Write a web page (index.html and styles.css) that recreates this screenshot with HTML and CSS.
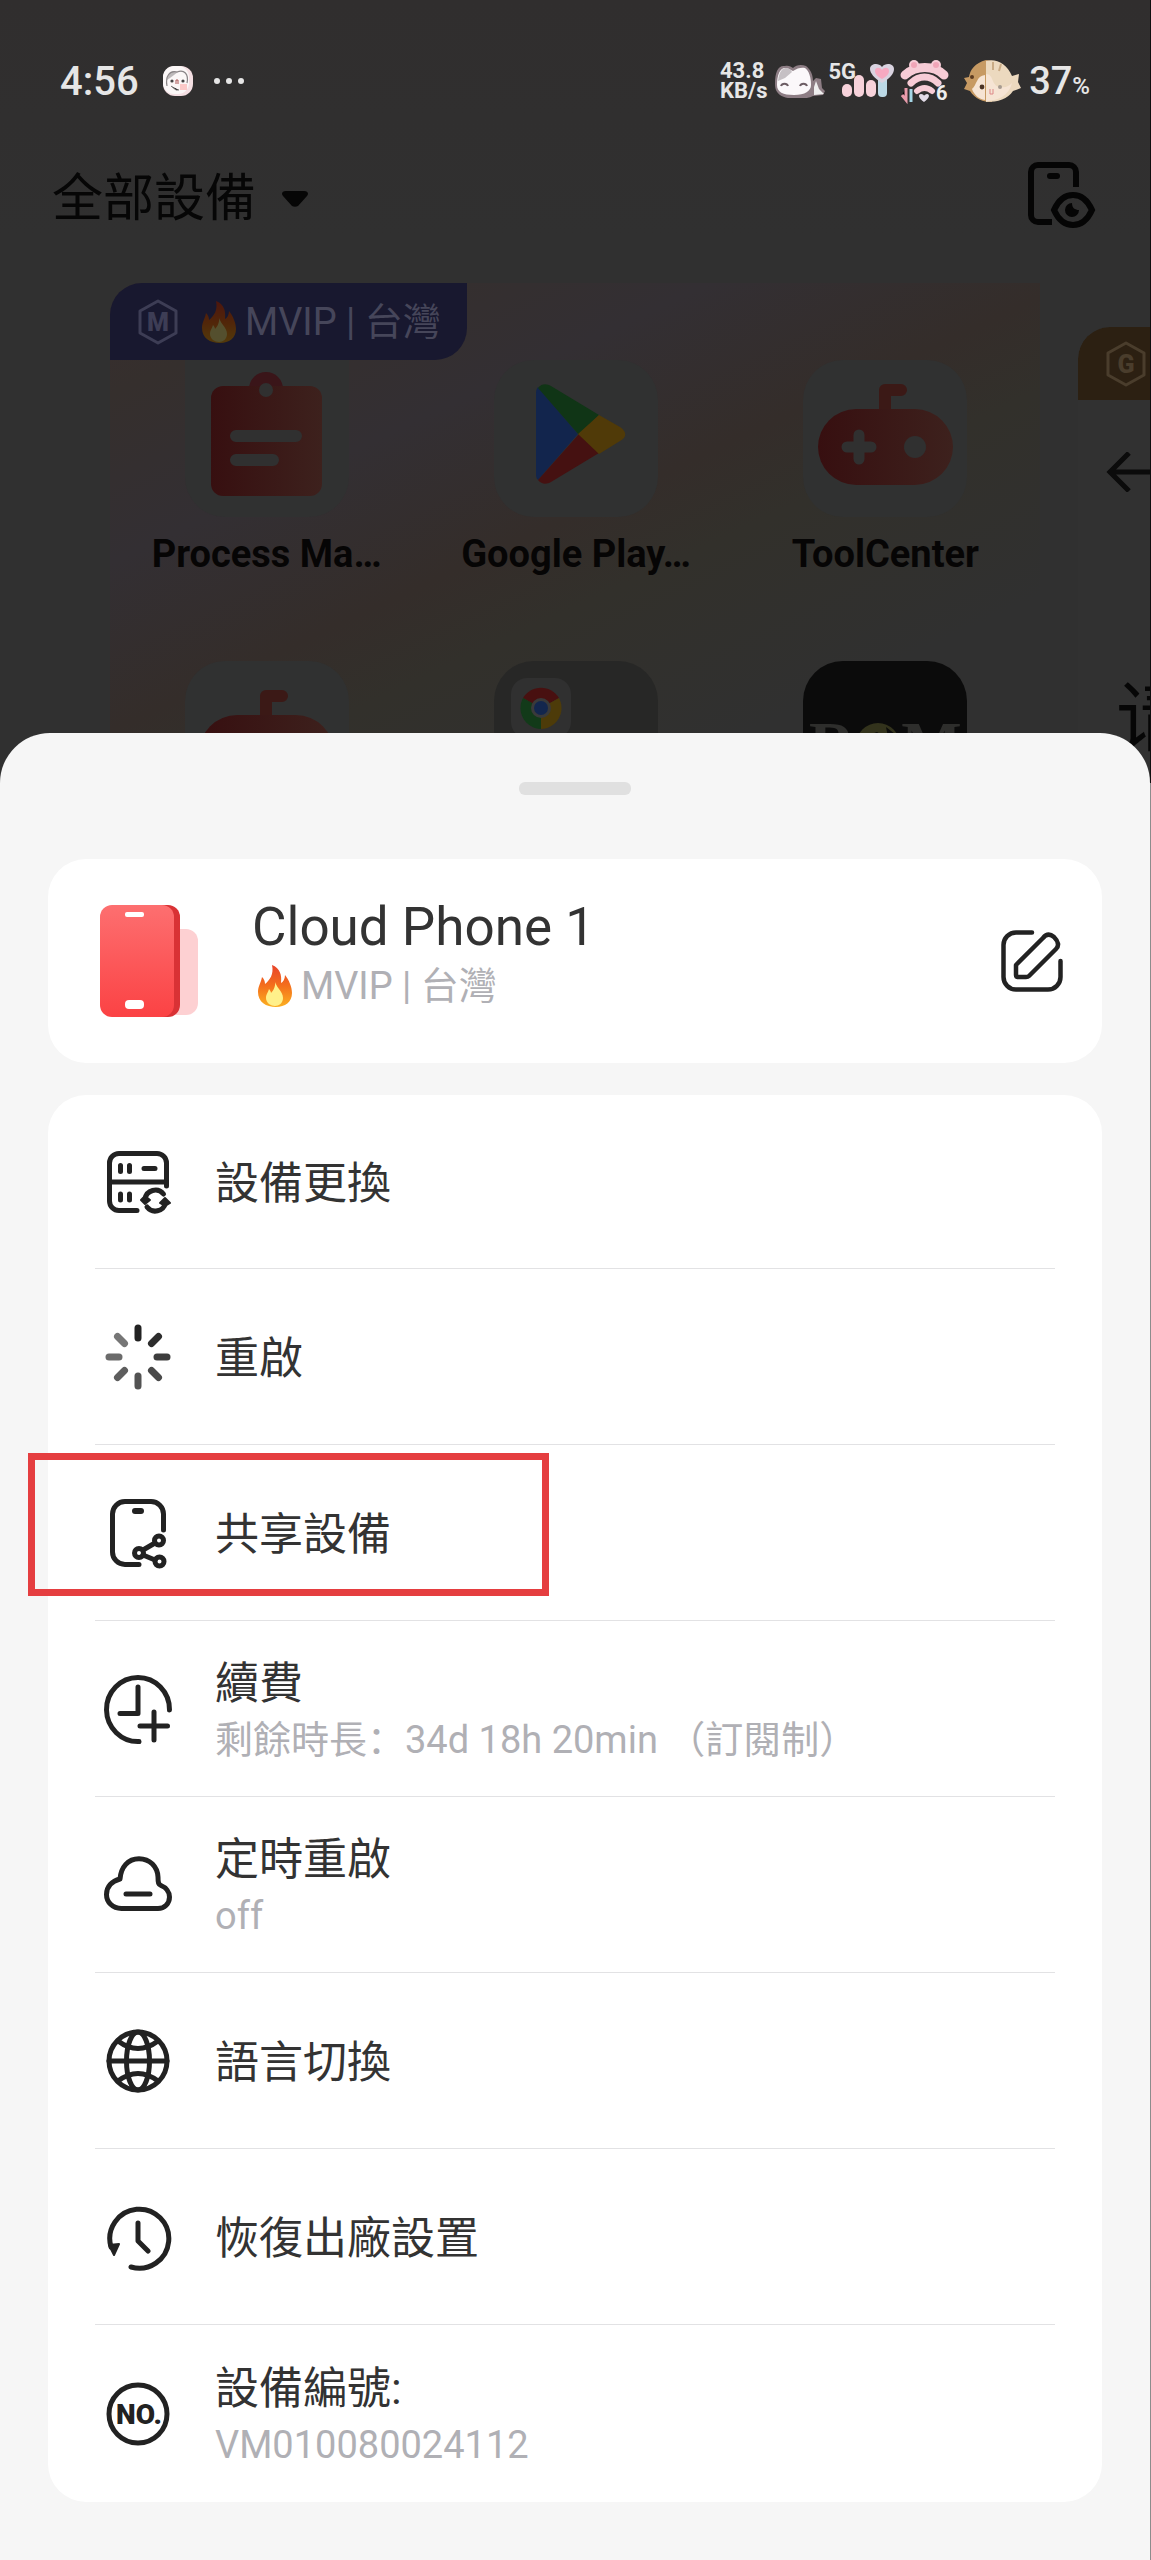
FILE: index.html
```html
<!DOCTYPE html>
<html lang="zh">
<head>
<meta charset="utf-8">
<meta name="viewport" content="width=device-width, initial-scale=1">
<title>Cloud Phone 1</title>
<link rel="stylesheet" href="styles.css">
</head>
<body>
<svg class="defs" aria-hidden="true">
  <defs>
    <linearGradient id="flame-outer" x1="0" y1="0" x2="0" y2="1">
      <stop offset="0" stop-color="#e8432a"/><stop offset=".5" stop-color="#f4701c"/><stop offset="1" stop-color="#fbb021"/>
    </linearGradient>
    <linearGradient id="dim-red" x1="0" y1="0" x2="1" y2="0">
      <stop offset="0" stop-color="#370f10"/><stop offset="1" stop-color="#3d211d"/>
    </linearGradient>
    <linearGradient id="phone-face" x1="0" y1="0" x2="0" y2="1">
      <stop offset="0" stop-color="#fd6f70"/><stop offset="1" stop-color="#fb4244"/>
    </linearGradient>
    <symbol id="flame" viewBox="0 0 34 42">
      <path fill="url(#flame-outer)" d="M14 0c8 3 10 10 9 18 2-1 4-4 4-8 4 5 7 12 7 18 0 9-7 14-16 14C8 42 0 37 0 27c0-6 3-9 4-15 2 2 3 4 3 7C12 15 16 9 14 0z"/>
      <path fill="#fff08a" d="M17 15c0 7 8 11 8 18 0 5-4 8-8 8s-9-3-9-8c0-4 2-5 3-9 1 1 2 3 2 4 3-3 5-8 4-13z"/>
    </symbol>
    <symbol id="gamepad" viewBox="0 0 135 104">
      <path fill="none" stroke="#3b1916" stroke-width="12" stroke-linecap="round" stroke-linejoin="round" d="M67 32V8h16"/>
      <rect y="27" width="135" height="76" rx="38" fill="url(#dim-red)"/>
      <path stroke="#303030" stroke-width="11" stroke-linecap="round" d="M41 53v24M29 65h24"/>
      <circle cx="97" cy="65" r="11" fill="#303030"/>
    </symbol>
  </defs>
</svg>

<main class="screen">
  <section class="backdrop">
    <div class="status">
      <span class="clock">4:56</span>
      <svg class="avatar" viewBox="0 0 30 30" aria-hidden="true">
        <rect width="30" height="30" rx="12" fill="#f4dfe3"/>
        <rect width="26" height="28" rx="11" fill="#fbf7f7"/>
        <path fill="#bdb9ba" d="M4 14C4 6 10 4 15 6l-8 6z"/>
        <path fill="none" stroke="#8a8587" stroke-width="1.2" d="M4 20C2 10 7 4 14 6c7-3 12 2 10 11"/>
        <circle cx="9" cy="15" r="1.6" fill="#444"/><circle cx="20" cy="15" r="1.6" fill="#444"/>
        <path fill="none" stroke="#a55" d="M13 18v-4h2v4"/><path fill="#fbc9c8" d="M17 18h7v6h-7z"/>
        <path stroke="#777" d="M8 20l5 4h3"/>
      </svg>
      <svg class="dots" viewBox="0 0 32 8" fill="#e6e6e6" aria-hidden="true"><circle cx="4" cy="4" r="3"/><circle cx="16" cy="4" r="3"/><circle cx="28" cy="4" r="3"/></svg>
      <span class="spacer"></span>
      <span class="speed">43.8<br>KB/s</span>
      <svg class="cat" viewBox="0 0 52 34" aria-hidden="true">
        <path fill="#8d7d84" d="M1 20C1 8 4 1 11 2c4-1 6 1 8 2 3-3 8-4 13-2 4 3 7 8 7 15l3-3 5 1 1 9 3 3-2 4-10 1c-8 4-26 4-33-1-4-3-5-7-5-11z"/>
        <path fill="#fbf8fa" d="M3 21C3 11 6 4 11 4c4 0 7 3 8 3 4-3 9-4 12-3 4 3 6 9 6 17 0 6-6 10-17 10S3 28 3 21z"/>
        <path fill="#c6c0c4" d="M4 17C5 8 8 4 12 4c3 0 5 2 6 4l-7 6z"/>
        <path fill="none" stroke="#6c5d64" stroke-width="2" d="M7 22c1-3 6-3 7 0M26 22c1-3 6-3 7 0"/>
        <path fill="#eee" d="M40 23l2-6 3 8 5 5-10 1z"/>
      </svg>
      <span class="net">5G</span>
      <svg class="signal" viewBox="0 0 52 34" aria-hidden="true">
        <rect y="20" width="10" height="13" rx="5" fill="#f7d2da"/><rect x="12" y="11" width="10" height="22" rx="5" fill="#f7d2da"/>
        <rect x="24" y="16" width="10" height="17" rx="5" fill="#f7d2da"/><rect x="36" y="12" width="9" height="21" rx="4" fill="#bcd9e6"/>
        <path fill="#d9d3e0" d="M40 19C32 14 28 9 28 5c0-5 8-7 12-2 4-5 12-3 12 2s-4 9-12 14z"/>
        <path fill="#f6a9c1" d="M40 15c-5-3-7-5-7-8 0-4 5-4 7-1 2-3 7-3 7 1 0 3-2 5-7 8z"/>
      </svg>
      <svg class="wifi" viewBox="0 0 50 44" aria-hidden="true">
        <g fill="none" stroke="#f7ccd6" stroke-linecap="round">
          <path stroke-width="9" d="M5 16C16 6 34 6 44 16"/><path stroke-width="7" d="M11 24c8-8 19-8 27 0"/><path stroke-width="6" d="M17 32c5-4 10-4 15 0"/>
        </g>
        <circle cx="14" cy="6" r="5" fill="#f7ccd6"/><circle cx="36" cy="6" r="5" fill="#f7ccd6"/>
        <circle cx="14" cy="6" r="3" fill="#f1a5b7"/><circle cx="36" cy="6" r="3" fill="#f1a5b7"/>
        <path stroke="#e99bab" stroke-width="3" d="M2 36l4 5V29"/><path stroke="#a5d6e6" stroke-width="3" d="M11 43V30"/>
        <path fill="#e3dce8" d="M24 43c-6-4-6-8-3-8 2 0 3 1 3 2 0-1 2-2 3-2 3 0 3 4-3 8z"/>
        <text class="badge-digit" x="36" y="41">6</text>
      </svg>
      <svg class="fish" viewBox="0 0 58 44" aria-hidden="true">
        <path fill="#c79a63" d="M23 1C12 4 7 11 6 18l-5 1 3 5-3 6 6 2c5 8 13 11 22 11V2z"/>
        <path fill="#ecd9bf" d="M23 2c9-3 21 2 26 15l7-2-1 8 3 6-8 3C45 40 35 43 23 43z"/>
        <path fill="#f6e4d4" d="M9 30c5-4 4-13 13-14v25C16 40 11 36 9 30zM23 15c8 0 5 12 14 13 6 1 9-1 12-4-3 13-15 18-26 18z"/>
        <circle cx="9" cy="18" r="2" fill="#5b3a21"/><circle cx="19" cy="28" r="2.4" fill="#4b3325"/><circle cx="37" cy="28" r="2" fill="#a79b90"/>
        <path fill="none" stroke="#d88" d="M27 30v5h3v-5"/><path fill="none" stroke="#c9ab86" stroke-width="2" d="M30 3v8M38 5l-2 7"/>
      </svg>
      <span class="battery">37<small>%</small></span>
    </div>

    <header class="topbar">
      <button class="filter" type="button">全部設備
        <svg class="caret" viewBox="0 0 26 16" aria-hidden="true"><path fill="#060606" d="M4 0h18c4 0 5 3 3 5l-9 10c-2 1-4 1-6 0L1 5C-1 3 0 0 4 0z"/></svg>
      </button>
      <button class="preview-toggle" type="button" aria-label="預覽">
        <svg viewBox="0 0 68 66" fill="none" stroke="#050505" stroke-width="6" aria-hidden="true">
          <path d="M48 25V10a7 7 0 0 0-7-7H10a7 7 0 0 0-7 7v43a7 7 0 0 0 7 7h14"/><path stroke-linecap="round" d="M22 14h7"/>
          <path d="M26 48c9-20 29-20 38 0-9 20-29 20-38 0z"/><path fill="#050505" stroke="none" d="M44 41a7 7 0 1 0 7 7c-4 0-7-2-7-7z"/>
        </svg>
      </button>
    </header>

    <div class="carousel">
      <article class="device">
        <div class="tag">
          <svg class="hex" viewBox="0 0 40 46" aria-hidden="true"><path fill="none" stroke="#3d3d55" stroke-width="3" stroke-linejoin="round" d="M20 2l18 10v22L20 44 2 34V12z"/><text class="hex-letter" x="20" y="32">M</text></svg>
          <span class="plan"><svg class="flame dim" aria-hidden="true"><use href="#flame"/></svg>MVIP | 台灣</span>
        </div>
        <div class="apps">
          <div class="app">
            <div class="tile"><svg class="clip" viewBox="0 0 111 124" aria-hidden="true">
              <circle cx="55" cy="17" r="17" fill="#3a1519"/><rect y="14" width="111" height="110" rx="12" fill="url(#dim-red)"/>
              <circle cx="55" cy="18" r="7" fill="#303030"/><path stroke="#303030" stroke-width="12" stroke-linecap="round" d="M25 64h60M25 88h37"/></svg></div>
            <span class="label">Process Ma…</span>
          </div>
          <div class="app">
            <div class="tile"><svg class="play" viewBox="0 0 90 100" aria-hidden="true">
              <path fill="#12254d" d="M0 10v80c0 2 0 4 2 6l40-46L2 3c-2 2-2 5-2 7z"/><path fill="#103516" d="M2 4c4-5 9-4 13-2l48 29-20 20z"/>
              <path fill="#451111" d="M2 96c4 5 9 4 13 2l48-29-20-19z"/><path fill="#503a08" d="M63 31l21 12c7 5 7 10 0 14L63 70 42 50z"/></svg></div>
            <span class="label">Google Play…</span>
          </div>
          <div class="app">
            <div class="tile"><svg class="pad" aria-hidden="true"><use href="#gamepad"/></svg></div>
            <span class="label">ToolCenter</span>
          </div>
          <div class="app"><div class="tile tall"><svg class="pad" aria-hidden="true"><use href="#gamepad"/></svg></div></div>
          <div class="app"><div class="tile tall folder"><div class="mini"><svg class="chrome" viewBox="0 0 42 42" aria-hidden="true">
            <path fill="#481010" d="M21 21L3 11a21 21 0 0 1 36 0z"/><path fill="#4d3b09" d="M21 21l18-10a21 21 0 0 1-18 31z"/><path fill="#123a19" d="M21 21v21A21 21 0 0 1 3 11z"/>
            <circle cx="21" cy="21" r="10" fill="#3a3a3a"/><circle cx="21" cy="21" r="7" fill="#13264d"/></svg></div></div></div>
          <div class="app"><div class="tile tall rom"><span class="rom-name">R<svg class="globe" viewBox="0 0 46 46" aria-hidden="true"><circle cx="23" cy="23" r="22" fill="#33331c"/><path fill="#0c0c0b" d="M4 16c8 3 11-4 18-6l6 4-9 6 8 3-14 5zM31 5l9 7-7 3z"/></svg>M</span></div></div>
        </div>
      </article>
      <article class="device next">
        <div class="tag gold"><svg class="hex" viewBox="0 0 40 46" aria-hidden="true"><path fill="none" stroke="#4a3d2c" stroke-width="3" stroke-linejoin="round" d="M20 2l18 10v22L20 44 2 34V12z"/><text class="hex-letter warm" x="20" y="32">G</text></svg></div>
        <svg class="back" viewBox="0 0 60 40" fill="none" stroke="#0b0b0b" stroke-width="5" aria-hidden="true"><path d="M23 1L4 20l19 19M4 20h56"/></svg>
        <p class="peek">请</p>
      </article>
    </div>
  </section>

  <section class="sheet">
    <div class="handle"></div>
    <div class="card summary">
      <svg class="phone" viewBox="0 0 98 112" aria-hidden="true">
        <rect x="62" y="24" width="36" height="86" rx="12" fill="#fdd0d2"/><rect x="20" width="60" height="112" rx="12" fill="#d93235"/>
        <rect width="74" height="112" rx="12" fill="url(#phone-face)"/><rect x="25" y="7" width="19" height="5" rx="2" fill="#fff"/><rect x="25" y="95" width="19" height="9" rx="4" fill="#fff"/>
      </svg>
      <div class="about">
        <h1 class="name">Cloud Phone 1</h1>
        <p class="plan muted"><svg class="flame" aria-hidden="true"><use href="#flame"/></svg>MVIP | 台灣</p>
      </div>
      <button class="edit" type="button" aria-label="編輯">
        <svg viewBox="0 0 62 62" fill="none" stroke="#222" stroke-width="4.500" stroke-linecap="round" stroke-linejoin="round" aria-hidden="true">
          <path d="M31 2.500H15A12.500 12.500 0 0 0 2.500 15v32A12.500 12.500 0 0 0 15 59.500h32A12.500 12.500 0 0 0 59.500 47V31"/>
          <path d="M15 35L42 8q5-6 11-1 7 7 2 12L28 46q-1 1-3 1h-8q-2 0-2-2z"/>
        </svg>
      </button>
    </div>

    <ul class="card menu">
      <li class="item"><button class="row" type="button">
        <svg class="icon" viewBox="0 0 72 72" aria-hidden="true">
          <path d="M64.500 40V17a9.500 9.500 0 0 0-9.500-9.500H17A9.500 9.500 0 0 0 7.500 17v38a9.500 9.500 0 0 0 9.500 9.500h18M7.500 36h57M18.500 19.500v6M27.500 19.500v6M42 22.500h11M18.500 48v6M27.500 48v6"/>
          <path d="M43 53a10.500 10.500 0 0 1 18.500-5M63.500 57A10.500 10.500 0 0 1 45 61"/>
          <path class="solid" d="M39 54l4-4 5 4-5 4zM58 57l5-5 5 5-5 3z"/>
        </svg>
        <span class="text"><span class="title">設備更換</span></span></button></li>
      <li class="item"><button class="row" type="button">
        <svg class="icon spokes" viewBox="0 0 72 72" aria-hidden="true">
          <path d="M36 7v10"/><path opacity=".95" d="M56.500 15.500l-7 7"/><path opacity=".88" d="M65 36H55"/><path opacity=".82" d="M56.500 56.500l-7-7"/>
          <path opacity=".78" d="M36 65V55"/><path opacity=".73" d="M15.500 56.500l7-7"/><path opacity=".67" d="M7 36h10"/><path opacity=".62" d="M15.500 15.500l7 7"/>
        </svg>
        <span class="text"><span class="title">重啟</span></span></button></li>
      <li class="item marked"><button class="row" type="button">
        <svg class="icon" viewBox="0 0 72 72" aria-hidden="true">
          <path d="M61.500 33V17A12.500 12.500 0 0 0 49 4.500H23A12.500 12.500 0 0 0 10.500 17v38A12.500 12.500 0 0 0 23 67.500h14"/>
          <path stroke-width="6" d="M33 14h6"/><circle cx="57" cy="43.500" r="4.500"/><circle cx="37" cy="56" r="4.500"/><circle cx="57.500" cy="64.500" r="4.500"/>
          <path d="M41 53l12-7M41 58l12 5"/>
        </svg>
        <span class="text"><span class="title">共享設備</span></span></button></li>
      <li class="item"><button class="row" type="button">
        <svg class="icon" viewBox="0 0 72 72" aria-hidden="true">
          <path d="M67.500 37A31.500 32 0 1 0 37 68.500M36 14v26.500H18M52 39v28M38 53h27.500"/>
        </svg>
        <span class="text"><span class="title">續費</span><span class="sub">剩餘時長：34d 18h 20min （訂閱制）</span></span></button></li>
      <li class="item"><button class="row" type="button">
        <svg class="icon" viewBox="0 0 72 72" aria-hidden="true">
          <path d="M19.500 59.500C10.500 59.500 4.500 53 4.500 45.500C4.500 37.500 10 32 18 30C19 18 26 9.700 37 9.700C48 9.700 55.500 18 56 28C56 34 56.500 35.500 59 36.500C64 38.500 67.500 43 67.500 48C67.500 54.500 62.500 59.500 56 59.500ZM24 45h24"/>
        </svg>
        <span class="text"><span class="title">定時重啟</span><span class="sub">off</span></span></button></li>
      <li class="item"><button class="row" type="button">
        <svg class="icon" viewBox="0 0 72 72" aria-hidden="true">
          <circle cx="36" cy="36" r="29"/><ellipse cx="36" cy="36" rx="11.500" ry="29"/><path d="M7 36h58M16 16q20 15 40 0M16 56q20-15 40 0"/>
        </svg>
        <span class="text"><span class="title">語言切換</span></span></button></li>
      <li class="item"><button class="row" type="button">
        <svg class="icon" viewBox="0 0 72 72" aria-hidden="true">
          <path d="M9 46A29.500 29.500 0 1 1 29 66M36 22v18l10 10"/><path class="solid" d="M7 44l10-1-5 11z"/>
        </svg>
        <span class="text"><span class="title">恢復出廠設置</span></span></button></li>
      <li class="item"><button class="row" type="button">
        <svg class="icon" viewBox="0 0 72 72" aria-hidden="true">
          <circle cx="36" cy="36" r="29"/><text class="icon-text" x="37" y="46">NO.</text>
        </svg>
        <span class="text"><span class="title">設備編號:</span><span class="sub">VM010080024112</span></span></button></li>
    </ul>
  </section>
</main>
</body>
</html>
```
FILE: styles.css
```css
*,
*::after {
  box-sizing: border-box;
}

body {
  margin: 0;
  background: #8c8c8c;
  font-family: Roboto, "Noto Sans CJK SC", sans-serif;
}

h1, p, ul {
  margin: 0;
  padding: 0;
  font-weight: 400;
}

button {
  margin: 0;
  padding: 0;
  border: 0;
  background: none;
  color: inherit;
  font: inherit;
  text-align: left;
}

svg {
  display: block;
  flex: none;
}

.defs {
  position: absolute;
  width: 0;
  height: 0;
}

.screen {
  display: flex;
  flex-direction: column;
  min-height: 100vh;
}

/* Dimmed home screen behind the sheet */
.backdrop {
  border-right: 1px solid #101010;
  background: linear-gradient(#302e2e, #303030 30%);
}

.status {
  display: flex;
  align-items: center;
  height: 112px;
  padding: 50px 60px 0 60px;
  color: #e6e6e6;
}

.clock {
  font-size: 40px;
  font-weight: 500;
}

.avatar {
  width: 30px;
  height: 30px;
  margin-left: 24px;
}

.dots {
  width: 32px;
  height: 8px;
  margin-left: 20px;
}

.spacer {
  flex: 1;
}

.speed {
  font-size: 22px;
  font-weight: 700;
  line-height: 20px;
}

.cat {
  width: 52px;
  height: 34px;
  margin-left: 6px;
}

.net {
  align-self: flex-start;
  margin: 10px -14px 0 3px;
  font-size: 22px;
  font-weight: 700;
  line-height: 24px;
}

.signal {
  width: 52px;
  height: 34px;
}

.wifi {
  width: 50px;
  height: 44px;
  margin-left: 6px;
  overflow: visible;
}

.badge-digit {
  fill: #eee;
  font-size: 20px;
  font-weight: 700;
}

.fish {
  width: 58px;
  height: 44px;
  margin: 0 8px 0 13px;
}

.battery {
  font-size: 38px;
  font-weight: 500;
}

.battery small {
  font-size: 24px;
}

.topbar {
  display: flex;
  align-items: center;
  justify-content: space-between;
  padding: 50px 54px 55px 52px;
  color: #060606;
}

.filter {
  display: flex;
  align-items: center;
  gap: 26px;
  padding-top: 8px;
  font-size: 51px;
  line-height: 58px;
}

.caret {
  width: 26px;
  height: 16px;
}

.preview-toggle svg {
  width: 68px;
  height: 66px;
}

.carousel {
  display: flex;
  gap: 38px;
  height: 500px;
  padding-left: 110px;
  overflow: hidden;
}

.device {
  flex: 1;
  border-radius: 32px 0 0 0;
  background: linear-gradient(155deg, #382e2e 0%, #352f2d 12%, #332f33 30%, #342d2a 48%, #32302b 58%, #303030 80%);
}

.device.next {
  flex: 0 0 72px;
  margin-top: 44px;
  background: #313131;
  overflow: hidden;
}

.tag {
  display: flex;
  align-items: center;
  gap: 24px;
  width: 357px;
  height: 77px;
  padding-left: 28px;
  border-radius: 32px 0 32px 0;
  background: #18182f;
  color: #46465a;
}

.tag.gold {
  height: 73px;
  background: #2c2012;
}

.hex {
  width: 40px;
  height: 46px;
}

.hex-letter {
  fill: #3d3d55;
  font-size: 25px;
  font-weight: 900;
  text-anchor: middle;
}

.hex-letter.warm {
  fill: #4a3d2c;
}

.plan {
  display: flex;
  align-items: center;
  gap: 9px;
  font-size: 38px;
  line-height: 54px;
}

.flame {
  width: 34px;
  height: 42px;
}

.flame.dim {
  filter: brightness(.33);
}

.apps {
  display: grid;
  grid-template-columns: repeat(3, 1fr);
  row-gap: 84px;
  padding-left: 2px;
}

.app {
  display: flex;
  flex-direction: column;
  align-items: center;
  gap: 14px;
}

.tile {
  display: flex;
  align-items: center;
  justify-content: center;
  width: 164px;
  height: 157px;
  padding-bottom: 10px;
  border-radius: 0 0 40px 40px;
  background: #303131;
}

.app:nth-child(n + 2) .tile {
  border-radius: 40px;
}

.tile.tall {
  height: 168px;
}

.clip {
  width: 111px;
  height: 124px;
}

.play {
  width: 90px;
  height: 100px;
  margin-left: 10px;
}

.pad {
  width: 135px;
  height: 104px;
}

.label {
  color: #060505;
  font-size: 38px;
  font-weight: 700;
  line-height: 46px;
}

.tile.folder {
  align-items: flex-start;
  justify-content: flex-start;
  padding: 17px;
  background: #272726;
}

.mini {
  padding: 9px;
  border-radius: 16px;
  background: #303030;
}

.chrome {
  width: 42px;
  height: 42px;
}

.tile.rom {
  padding: 0;
  background: #0b0b0b;
}

.rom-name {
  display: flex;
  align-items: center;
  color: #2e2e2c;
  font-family: "Liberation Serif", serif;
  font-size: 64px;
  font-weight: 700;
  line-height: 64px;
}

.globe {
  width: 46px;
  height: 46px;
}

.back {
  width: 60px;
  height: 40px;
  margin: 52px 0 0 28px;
}

.peek {
  margin: 172px 0 0 38px;
  color: #060606;
  font-size: 76px;
  line-height: 110px;
}

/* Bottom sheet */
.sheet {
  position: relative;
  display: flex;
  flex: 1;
  flex-direction: column;
  gap: 32px;
  margin: -50px 1px 0 0;
  padding: 49px 48px 58px 48px;
  border-radius: 50px 50px 0 0;
  background: #f6f6f6;
}

.handle {
  align-self: center;
  width: 112px;
  height: 13px;
  margin-bottom: 32px;
  border-radius: 6px;
  background: #e0e0e0;
}

.card {
  border-radius: 38px;
  background: #fff;
}

.summary {
  display: flex;
  align-items: center;
  padding: 30px 39px 30px 52px;
}

.phone {
  width: 98px;
  height: 112px;
}

.about {
  flex: 1;
  padding: 5px 0 21px 54px;
}

.name {
  color: #333;
  font-size: 53px;
  line-height: 66px;
}

.muted {
  padding-left: 6px;
  color: #b0b0b5;
}

.about .plan {
  height: 52px;
}

.edit svg {
  width: 62px;
  height: 62px;
}

.menu {
  padding: 0 47px;
  list-style: none;
}

.item {
  position: relative;
  border-bottom: 1px solid #e2e2e4;
}

.item:last-child {
  border-bottom: 0;
}

.row {
  display: flex;
  align-items: center;
  gap: 41px;
  width: 100%;
  min-height: 175px;
  padding-left: 7px;
}

.item:first-child .row {
  min-height: 173px;
}

.item:last-child .row {
  min-height: 177px;
}

.icon {
  width: 72px;
  height: 72px;
  fill: none;
  stroke: #222;
  stroke-width: 5;
  stroke-linecap: round;
  stroke-linejoin: round;
}

.spokes {
  stroke-width: 7;
}

.solid {
  fill: #222;
  stroke-width: 2;
}

.icon-text {
  fill: #222;
  stroke: none;
  font-size: 28px;
  font-weight: 900;
  text-anchor: middle;
}

.text {
  display: flex;
  flex-direction: column;
  padding-top: 4px;
}

.title {
  color: #333;
  font-size: 44px;
  line-height: 58px;
}

.sub {
  color: #b0b0b5;
  font-size: 38px;
  line-height: 54px;
}

/* Highlight frame drawn over the share entry */
.marked::after {
  content: "";
  position: absolute;
  top: 8px;
  left: -67px;
  width: 521px;
  height: 143px;
  border: 7px solid #e53e40;
  pointer-events: none;
}
```
